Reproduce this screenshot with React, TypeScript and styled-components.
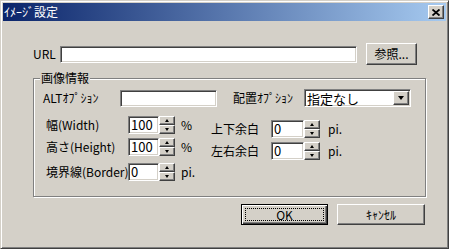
import React from 'react';
import styled, { createGlobalStyle, css } from 'styled-components';

const GlobalStyle = createGlobalStyle`
  html, body {
    margin: 0;
    padding: 0;
    background: #d4d0c8;
  }
  body {
    font-family: "Noto Sans CJK JP", "Noto Sans", sans-serif;
    font-size: 12px;
    color: #000;
  }
`;

const raised = css`
  box-sizing: border-box;
  background: #d4d0c8;
  border: 1px solid;
  border-color: #fff #404040 #404040 #fff;
  box-shadow: inset -1px -1px 0 #808080, inset 1px 1px 0 #d4d0c8;
`;

const sunken = css`
  box-sizing: border-box;
  background: #fff;
  border: 1px solid;
  border-color: #808080 #fff #fff #808080;
  box-shadow: inset 1px 1px 0 #404040, inset -1px -1px 0 #d4d0c8;
`;

const Window = styled.div`
  box-sizing: border-box;
  width: 449px;
  height: 249px;
  padding: 2px;
  display: flex;
  flex-direction: column;
  background: #d4d0c8;
  border: 1px solid;
  border-color: #d4d0c8 #404040 #404040 #d4d0c8;
  box-shadow: inset 1px 1px 0 #fff, inset -1px -1px 0 #808080;
`;

const TitleBar = styled.div`
  height: 18px;
  display: flex;
  align-items: center;
  justify-content: space-between;
  padding: 0 2px 0 1px;
  background: linear-gradient(90deg, #0a246a 0%, #a6caf0 100%);
  color: #fff;
  line-height: 18px;
`;

const CloseButton = styled.div`
  ${raised};
  width: 16px;
  height: 14px;
  display: flex;
  align-items: center;
  justify-content: center;
`;

const Body = styled.div`
  display: flex;
  flex-direction: column;
  padding: 22px 20px 0 30px;
`;

const Row = styled.div<{ $top?: number; $left?: number }>`
  display: flex;
  align-items: center;
  margin-top: ${(p) => p.$top ?? 0}px;
  padding-left: ${(p) => p.$left ?? 0}px;
`;

const Label = styled.span<{ $w: number; $ml?: number }>`
  width: ${(p) => p.$w}px;
  margin-left: ${(p) => p.$ml ?? 0}px;
  flex: none;
  line-height: 14px;
  white-space: nowrap;
`;

const TextBox = styled.div<{ $w: number; $h?: number }>`
  ${sunken};
  width: ${(p) => p.$w}px;
  height: ${(p) => p.$h ?? 17}px;
  flex: none;
  padding: 0 2px;
  line-height: ${(p) => (p.$h ?? 17) - 2}px;
  font-size: 13px;
`;

const PushButton = styled.div<{ $w: number; $h: number; $ml?: number }>`
  ${raised};
  width: ${(p) => p.$w}px;
  height: ${(p) => p.$h}px;
  margin-left: ${(p) => p.$ml ?? 0}px;
  flex: none;
  display: flex;
  align-items: center;
  justify-content: center;
  line-height: 14px;
`;

const DefaultButton = styled.div<{ $w: number; $h: number }>`
  box-sizing: border-box;
  width: ${(p) => p.$w}px;
  height: ${(p) => p.$h}px;
  flex: none;
  display: flex;
  padding: 3px;
  background: #d4d0c8;
  border: 1px solid #000;
  box-shadow: inset 1px 1px 0 #fff, inset -1px -1px 0 #404040, inset -2px -2px 0 #808080;
`;

const FocusRing = styled.div`
  flex: 1;
  display: flex;
  align-items: center;
  justify-content: center;
  border: 1px dotted #000;
  line-height: 14px;
`;

const Group = styled.div`
  position: relative;
  box-sizing: border-box;
  width: 393px;
  height: 119px;
  margin-top: 13px;
  padding-top: 10px;
  border: 1px solid #808080;
  box-shadow: inset 1px 1px 0 #fff, 1px 1px 0 #fff;
`;

const Legend = styled.span`
  position: absolute;
  top: -8px;
  left: 6px;
  padding: 0 1px;
  background: #d4d0c8;
  line-height: 14px;
`;

const Select = styled.div<{ $w: number }>`
  ${sunken};
  width: ${(p) => p.$w}px;
  height: 18px;
  flex: none;
  display: flex;
  align-items: stretch;
  padding: 1px 1px 1px 2px;
`;

const SelectText = styled.span`
  flex: 1;
  line-height: 15px;
  font-size: 13px;
`;

const DropButton = styled.div`
  ${raised};
  width: 16px;
  display: flex;
  align-items: center;
  justify-content: center;
`;

const Columns = styled.div`
  display: flex;
  margin-top: 9px;
`;

const Column = styled.div<{ $w?: number; $left: number; $top?: number }>`
  display: flex;
  flex-direction: column;
  width: ${(p) => (p.$w ? `${p.$w}px` : 'auto')};
  padding-left: ${(p) => p.$left}px;
  margin-top: ${(p) => p.$top ?? 0}px;
  flex: none;
`;

const Spinner = styled.div`
  width: 16px;
  height: 18px;
  flex: none;
  display: flex;
  flex-direction: column;
`;

const SpinButton = styled.div`
  ${raised};
  flex: 1;
  display: flex;
  align-items: center;
  justify-content: center;
`;

const Arrow = styled.span<{ $down?: boolean; $size?: number }>`
  width: 0;
  height: 0;
  border-left: ${(p) => p.$size ?? 2}px solid transparent;
  border-right: ${(p) => p.$size ?? 2}px solid transparent;
  ${(p) =>
    p.$down
      ? `border-top: ${Math.ceil((p.$size ?? 2) * 0.75) + 1}px solid #000;`
      : `border-bottom: ${Math.ceil((p.$size ?? 2) * 0.75) + 1}px solid #000;`}
`;

const Unit = styled.span<{ $ml: number }>`
  margin-left: ${(p) => p.$ml}px;
  line-height: 14px;
`;

const Footer = styled.div`
  display: flex;
  justify-content: flex-end;
  gap: 9px;
  margin-top: 7px;
  padding-right: 1px;
`;

type NumberFieldProps = {
  label: string;
  labelWidth: number;
  boxWidth: number;
  value: string;
  unit: string;
  unitGap: number;
  top?: number;
};

const NumberField = ({ label, labelWidth, boxWidth, value, unit, unitGap, top }: NumberFieldProps) => (
  <Row $top={top}>
    <Label $w={labelWidth}>{label}</Label>
    <TextBox $w={boxWidth} $h={18}>{value}</TextBox>
    <Spinner>
      <SpinButton>
        <Arrow />
      </SpinButton>
      <SpinButton>
        <Arrow $down />
      </SpinButton>
    </Spinner>
    <Unit $ml={unitGap}>{unit}</Unit>
  </Row>
);

const App = () => (
  <>
    <GlobalStyle />
    <Window>
      <TitleBar>
        <span>ｲﾒｰｼﾞ設定</span>
        <CloseButton>
          <svg width="8" height="7" viewBox="0 0 8 7">
            <path d="M0.5 0.5 L7.5 6.5 M7.5 0.5 L0.5 6.5" stroke="#000" strokeWidth="1.8" />
          </svg>
        </CloseButton>
      </TitleBar>
      <Body>
        <Row>
          <Label $w={27}>URL</Label>
          <TextBox $w={297} />
          <PushButton $w={51} $h={22} $ml={9}>
            参照...
          </PushButton>
        </Row>
        <Group>
          <Legend>画像情報</Legend>
          <Row $left={9}>
            <Label $w={77}>ALTｵﾌﾟｼｮﾝ</Label>
            <TextBox $w={97} />
            <Label $w={71} $ml={16}>
              配置ｵﾌﾟｼｮﾝ
            </Label>
            <Select $w={107}>
              <SelectText>指定なし</SelectText>
              <DropButton>
                <Arrow $down $size={3} />
              </DropButton>
            </Select>
          </Row>
          <Columns>
            <Column $w={165} $left={12}>
              <NumberField label="幅(Width)" labelWidth={82} boxWidth={31} value="100" unit="%" unitGap={6} />
              <NumberField label="高さ(Height)" labelWidth={82} boxWidth={31} value="100" unit="%" unitGap={6} top={4} />
              <NumberField label="境界線(Border)" labelWidth={82} boxWidth={31} value="0" unit="pi." unitGap={6} top={7} />
            </Column>
            <Column $left={0} $top={4}>
              <NumberField label="上下余白" labelWidth={60} boxWidth={33} value="0" unit="pi." unitGap={8} />
              <NumberField label="左右余白" labelWidth={60} boxWidth={33} value="0" unit="pi." unitGap={8} top={4} />
            </Column>
          </Columns>
        </Group>
        <Footer>
          <DefaultButton $w={87} $h={21}>
            <FocusRing>OK</FocusRing>
          </DefaultButton>
          <PushButton $w={88} $h={21}>
            ｷｬﾝｾﾙ
          </PushButton>
        </Footer>
      </Body>
    </Window>
  </>
);

export default App;
